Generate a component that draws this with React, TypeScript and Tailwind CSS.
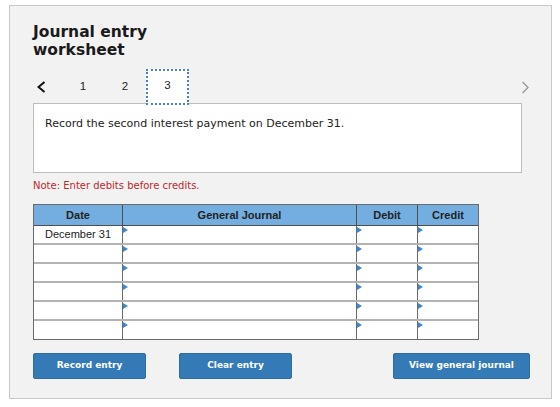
import React from "react";

const rows = ["December 31", "", "", "", "", ""];

const Marker = () => (
  <svg width="5" height="6" viewBox="0 0 5 6" className="mt-[1px] shrink-0">
    <polygon points="0,0 5,3 0,6" fill="#3d86cf" />
  </svg>
);

const JournalTable = () => {
  return (
    <div className="w-[446px] border border-[#6b6b6b] bg-white font-['Liberation_Sans',Arial,sans-serif] text-[11px] text-[#222]">
      <div className="flex h-[21px] bg-[#74aee0] border-b border-[#4d4d4d] font-bold">
        <div className="w-[88px] flex items-center justify-center">Date</div>
        <div className="w-[234px] border-l border-[#4d4d4d] flex items-center justify-center">
          General Journal
        </div>
        <div className="w-[61px] border-l border-[#4d4d4d] flex items-center justify-center">
          Debit
        </div>
        <div className="flex-1 border-l border-[#4d4d4d] flex items-center justify-center">
          Credit
        </div>
      </div>
      {rows.map((date, i) => (
        <div
          key={i}
          className={`flex ${i < rows.length - 1 ? "h-[19px] border-b-2 border-[#b3b3b3]" : "h-[18px]"}`}
        >
          <div className="w-[88px] flex items-center justify-center">{date}</div>
          <div className="w-[234px] border-l border-[#6b6b6b] flex items-start">
            <Marker />
          </div>
          <div className="w-[61px] border-l border-[#6b6b6b] flex items-start">
            <Marker />
          </div>
          <div className="flex-1 border-l border-[#6b6b6b] flex items-start">
            <Marker />
          </div>
        </div>
      ))}
    </div>
  );
};

const App = () => {
  return (
    <div className="w-[560px] h-[407px] bg-white pt-[5px] pl-[9px]">
      <div className="w-[543px] h-[394px] border border-[#c8c8c8] bg-[#f2f2f2] pl-[23px] pr-[21px] pt-[17px] font-['DejaVu_Sans',Verdana,sans-serif]">
        <h2 className="w-[150px] text-[15.5px] leading-[18px] font-bold text-[#1a1a1a]">
          Journal entry worksheet
        </h2>

        <div className="relative z-10 mt-[10px] -mb-[2px] flex h-[36px] items-stretch font-['Liberation_Sans',Arial,sans-serif] text-[11.5px] text-[#222]">
          <div className="w-[29px] flex items-center pl-[4px]">
            <svg width="9" height="12" viewBox="0 0 9 12">
              <polyline
                points="7.5,1 1.5,6 7.5,11"
                fill="none"
                stroke="#111"
                strokeWidth="2"
              />
            </svg>
          </div>
          <div className="w-[42px] flex items-center justify-center">1</div>
          <div className="w-[42px] flex items-center justify-center">2</div>
          <div className="w-[43px] flex items-center justify-center border-2 border-dotted border-[#4a7fc1] bg-white pb-[3px]">
            3
          </div>
          <div className="ml-auto flex items-center">
            <svg width="9" height="13" viewBox="0 0 9 13">
              <polyline
                points="1.5,1 7,6.5 1.5,12"
                fill="none"
                stroke="#9a9a9a"
                strokeWidth="1.4"
              />
            </svg>
          </div>
        </div>

        <div className="w-[489px] h-[70px] border border-[#bdbdbd] bg-white pl-[11px] pt-[12px] text-[11px] leading-[16px] text-[#222]">
          Record the second interest payment on December 31.
        </div>

        <p className="mt-[6px] text-[10px] leading-[14px] text-[#c1272d]">
          Note: Enter debits before credits.
        </p>

        <div className="mt-[11px]">
          <JournalTable />
        </div>

        <div className="mt-[13px] flex text-[9px] font-bold text-white">
          <button className="w-[113px] h-[26px] rounded-[2px] border border-[#2e6da4] bg-[#337ab7]">
            Record entry
          </button>
          <button className="ml-[33px] w-[113px] h-[26px] rounded-[2px] border border-[#2e6da4] bg-[#337ab7]">
            Clear entry
          </button>
          <button className="ml-auto w-[137px] h-[26px] rounded-[2px] border border-[#2e6da4] bg-[#337ab7]">
            View general journal
          </button>
        </div>
      </div>
    </div>
  );
};

export default App;
